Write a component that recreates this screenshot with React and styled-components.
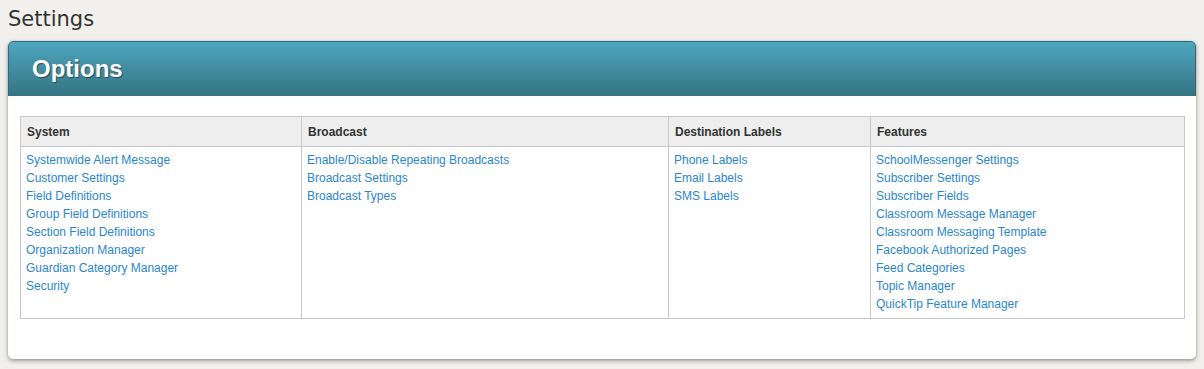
import styled, { createGlobalStyle } from "styled-components";

const GlobalStyle = createGlobalStyle`
  html, body {
    margin: 0;
    padding: 0;
    background: #f1f0ed;
  }
  body {
    font-family: "Liberation Sans", Arial, sans-serif;
  }
`;

const Page = styled.div`
  padding: 4px 8px 10px 8px;
`;

const PageTitle = styled.h1`
  margin: 0 0 7px 0;
  font-family: "DejaVu Sans", Verdana, sans-serif;
  font-weight: normal;
  font-size: 21px;
  line-height: 30px;
  color: #333;
`;

const Panel = styled.div`
  background: #fff;
  border-radius: 5px;
  box-shadow: 0 2px 4px rgba(0, 0, 0, 0.35), 0 0 2px rgba(0, 0, 0, 0.15);
  overflow: hidden;
`;

const PanelHeader = styled.div`
  height: 55px;
  display: flex;
  align-items: center;
  padding: 0 23px;
  background: linear-gradient(#4ea6bf, #347482);
  border: 1px solid #2f6a7a;
  border-bottom: none;
  border-radius: 5px 5px 0 0;
  box-sizing: border-box;
`;

const PanelTitle = styled.h2`
  margin: 0;
  font-size: 24px;
  font-weight: bold;
  color: #fff;
  text-shadow: 1px 1px 1px rgba(0, 0, 0, 0.45);
`;

const PanelBody = styled.div`
  padding: 20px 12px 40px 12px;
`;

const Table = styled.table`
  width: 100%;
  table-layout: fixed;
  border-collapse: collapse;
  border: 1px solid #c8c8c8;
  font-size: 12px;
`;

const Col = styled.col`
  width: ${(p) => p.$w}px;
`;

const HeadCell = styled.th`
  background: #eeeeee;
  color: #333;
  font-weight: bold;
  text-align: left;
  height: 29px;
  padding: 0 6px;
  border: 1px solid #c8c8c8;
`;

const Cell = styled.td`
  vertical-align: top;
  padding: 4px 5px 5px 5px;
  border-left: 1px solid #c8c8c8;
`;

const LinkList = styled.div`
  display: flex;
  flex-direction: column;
`;

const LinkItem = styled.a`
  color: #2a86cf;
  text-decoration: none;
  line-height: 18px;
  cursor: pointer;
`;

const columns = [
  {
    title: "System",
    w: 281,
    links: [
      "Systemwide Alert Message",
      "Customer Settings",
      "Field Definitions",
      "Group Field Definitions",
      "Section Field Definitions",
      "Organization Manager",
      "Guardian Category Manager",
      "Security",
    ],
  },
  {
    title: "Broadcast",
    w: 367,
    links: [
      "Enable/Disable Repeating Broadcasts",
      "Broadcast Settings",
      "Broadcast Types",
    ],
  },
  {
    title: "Destination Labels",
    w: 202,
    links: ["Phone Labels", "Email Labels", "SMS Labels"],
  },
  {
    title: "Features",
    w: 314,
    links: [
      "SchoolMessenger Settings",
      "Subscriber Settings",
      "Subscriber Fields",
      "Classroom Message Manager",
      "Classroom Messaging Template",
      "Facebook Authorized Pages",
      "Feed Categories",
      "Topic Manager",
      "QuickTip Feature Manager",
    ],
  },
];

export default function App() {
  return (
    <>
      <GlobalStyle />
      <Page>
        <PageTitle>Settings</PageTitle>
        <Panel>
          <PanelHeader>
            <PanelTitle>Options</PanelTitle>
          </PanelHeader>
          <PanelBody>
            <Table>
              <colgroup>
                {columns.map((c) => (
                  <Col key={c.title} $w={c.w} />
                ))}
              </colgroup>
              <thead>
                <tr>
                  {columns.map((c) => (
                    <HeadCell key={c.title}>{c.title}</HeadCell>
                  ))}
                </tr>
              </thead>
              <tbody>
                <tr>
                  {columns.map((c) => (
                    <Cell key={c.title}>
                      <LinkList>
                        {c.links.map((l) => (
                          <LinkItem key={l}>{l}</LinkItem>
                        ))}
                      </LinkList>
                    </Cell>
                  ))}
                </tr>
              </tbody>
            </Table>
          </PanelBody>
        </Panel>
      </Page>
    </>
  );
}
